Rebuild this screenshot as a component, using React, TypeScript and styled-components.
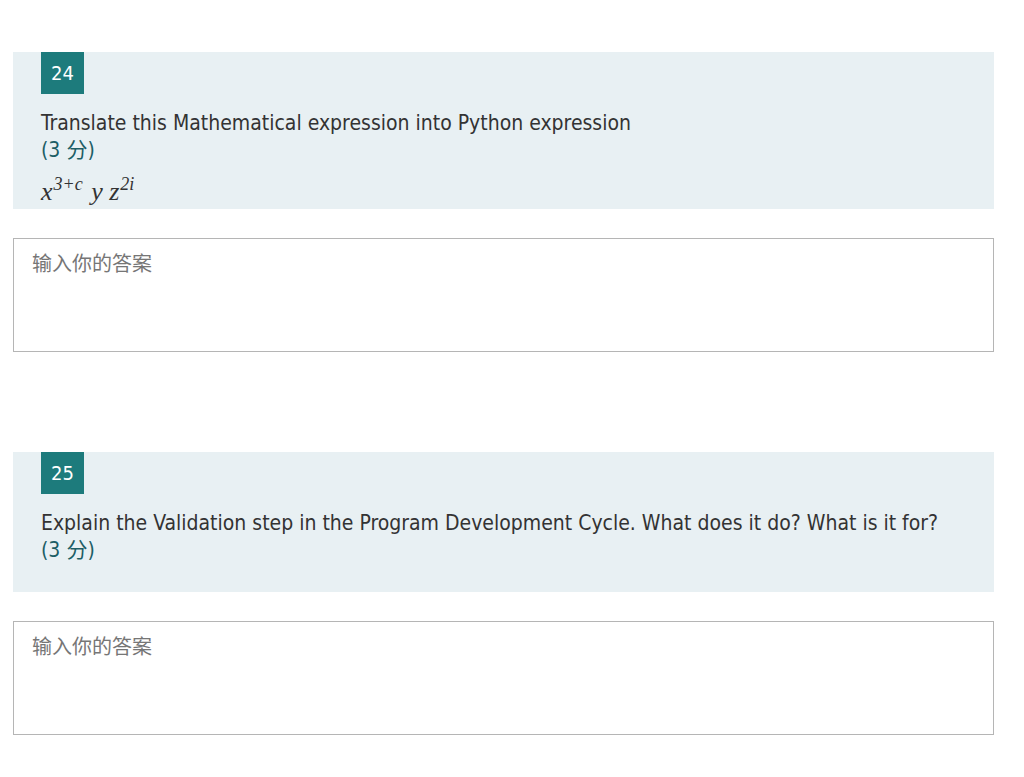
import React from "react";
import styled, { createGlobalStyle } from "styled-components";

const GlobalStyle = createGlobalStyle`
  html, body {
    margin: 0;
    padding: 0;
    background: #ffffff;
  }
  body {
    font-family: "DejaVu Sans Condensed", "DejaVu Sans", "Noto Sans CJK SC", sans-serif;
    color: #333333;
  }
`;

const Page = styled.div`
  padding: 52px 30px 40px 13px;
  display: flex;
  flex-direction: column;
`;

const Question = styled.section<{ $gap: number }>`
  display: flex;
  flex-direction: column;
  margin-bottom: ${(p) => p.$gap}px;
`;

const QuestionCard = styled.div<{ $pad: number }>`
  background: #e8f0f3;
  padding: 0 28px ${(p) => p.$pad}px 28px;
  display: flex;
  flex-direction: column;
  align-items: flex-start;
`;

const Badge = styled.div`
  width: 43px;
  height: 42px;
  background: #1d7b7c;
  color: #ffffff;
  font-size: 20px;
  display: flex;
  align-items: center;
  justify-content: center;
`;

const Title = styled.div`
  margin-top: 15px;
  font-size: 21px;
  line-height: 28px;
  color: #333333;
`;

const Points = styled.div`
  font-size: 21px;
  line-height: 26px;
  color: #1c5e66;
`;

const Formula = styled.div`
  margin-top: 14px;
  font-family: "Liberation Serif", "DejaVu Serif", serif;
  font-style: italic;
  font-size: 26px;
  line-height: 30px;
  color: #333333;
  white-space: pre;

  sup {
    font-size: 18px;
    vertical-align: 10px;
    line-height: 0;
    margin-left: 1px;
    margin-right: 2px;
  }
`;

const AnswerBox = styled.div`
  margin-top: 29px;
  border: 1px solid #b5b5b5;
  padding: 10px 18px;
  box-sizing: border-box;
  height: 114px;
  font-family: "Noto Sans CJK SC", sans-serif;
  font-size: 20px;
  line-height: 28px;
  color: #767676;
`;

type Item = {
  num: number;
  title: string;
  formula?: boolean;
  pad: number;
  gap: number;
};

const items: Item[] = [
  {
    num: 24,
    title: "Translate this Mathematical expression into Python expression",
    formula: true,
    pad: 2,
    gap: 100,
  },
  {
    num: 25,
    title: "Explain the Validation step in the Program Development Cycle. What does it do? What is it for?",
    pad: 29,
    gap: 0,
  },
];

const App: React.FC = () => {
  return (
    <>
      <GlobalStyle />
      <Page>
        {items.map((q) => (
          <Question key={q.num} $gap={q.gap}>
            <QuestionCard $pad={q.pad}>
              <Badge>{q.num}</Badge>
              <Title>{q.title}</Title>
              <Points>(3 分)</Points>
              {q.formula && (
                <Formula>
                  x<sup>3+c</sup> y z<sup>2i</sup>
                </Formula>
              )}
            </QuestionCard>
            <AnswerBox>输入你的答案</AnswerBox>
          </Question>
        ))}
      </Page>
    </>
  );
};

export default App;
